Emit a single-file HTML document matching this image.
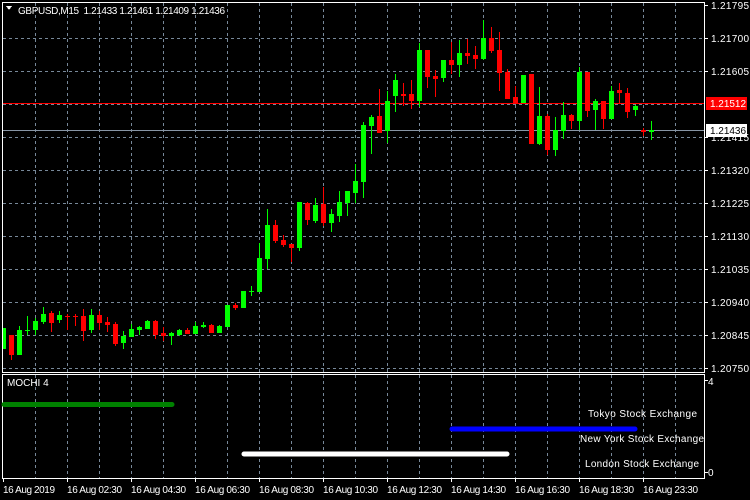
<!DOCTYPE html>
<html><head><meta charset="utf-8"><style>
html,body{margin:0;padding:0;background:#000;width:750px;height:500px;overflow:hidden}
svg{display:block}
text{font-family:"Liberation Sans","DejaVu Sans",sans-serif;font-size:10px;fill:#fff}
</style></head><body>
<svg width="750" height="500" viewBox="0 0 750 500" xmlns="http://www.w3.org/2000/svg" shape-rendering="crispEdges">
<rect width="750" height="500" fill="#000"/>
<g stroke="#778899" stroke-width="1" stroke-dasharray="3,3">
<path d="M35.5 3V372M67.5 3V372M99.5 3V372M131.5 3V372M163.5 3V372M195.5 3V372M227.5 3V372M259.5 3V372M291.5 3V372M323.5 3V372M355.5 3V372M387.5 3V372M419.5 3V372M451.5 3V372M483.5 3V372M515.5 3V372M547.5 3V372M579.5 3V372M611.5 3V372M643.5 3V372M675.5 3V372"/>
<path d="M3 38.5H704M3 71.5H704M3 104.5H704M3 137.5H704M3 170.5H704M3 203.5H704M3 236.5H704M3 269.5H704M3 302.5H704M3 335.5H704M3 368.5H704"/>
<path d="M35.5 375V478M67.5 375V478M99.5 375V478M131.5 375V478M163.5 375V478M195.5 375V478M227.5 375V478M259.5 375V478M291.5 375V478M323.5 375V478M355.5 375V478M387.5 375V478M419.5 375V478M451.5 375V478M483.5 375V478M515.5 375V478M547.5 375V478M579.5 375V478M611.5 375V478M643.5 375V478M675.5 375V478"/>
</g>
<line x1="2" y1="103.5" x2="704" y2="103.5" stroke="#ff0000"/>
<line x1="2" y1="130.5" x2="704" y2="130.5" stroke="#8795a5"/>
<rect x="2.5" y="2.5" width="702" height="370" fill="none" stroke="#fff"/>
<rect x="2.5" y="374.5" width="702" height="104" fill="none" stroke="#fff"/>
<g stroke="#fff"><path d="M705 5.5H708M705 38.5H708M705 71.5H708M705 137.5H708M705 170.5H708M705 203.5H708M705 236.5H708M705 269.5H708M705 302.5H708M705 335.5H708M705 368.5H708M705 380.5H708M705 472.5H708"/>
<path d="M3.5 479V482M67.5 479V482M131.5 479V482M195.5 479V482M259.5 479V482M323.5 479V482M387.5 479V482M451.5 479V482M515.5 479V482M579.5 479V482M643.5 479V482"/></g>
<g>
<text x="711" y="9" textLength="38">1.21795</text><text x="711" y="42" textLength="38">1.21700</text><text x="711" y="75" textLength="38">1.21605</text>
<text x="711" y="141" textLength="38">1.21415</text><text x="711" y="174" textLength="38">1.21320</text><text x="711" y="207" textLength="38">1.21225</text>
<text x="711" y="240" textLength="38">1.21130</text><text x="711" y="273" textLength="38">1.21035</text><text x="711" y="306" textLength="38">1.20940</text>
<text x="711" y="339" textLength="38">1.20845</text><text x="711" y="372" textLength="38">1.20750</text>
</g>
<rect x="706" y="97" width="41" height="13" fill="#ff0000"/>
<text x="710" y="107" textLength="36">1.21512</text>
<rect x="706" y="124" width="41" height="13" fill="#fff"/>
<text x="710" y="134" textLength="36" style="fill:#000">1.21436</text>
<path d="M6 6H12L9 10Z" fill="#fff"/>
<text x="18" y="14" textLength="207" xml:space="preserve">GBPUSD,M15  1.21433 1.21461 1.21409 1.21436</text>
<text x="7" y="386">MOCHI 4</text>
<text x="708" y="385">4</text><text x="708" y="476">0</text>
<g stroke-linecap="round" stroke-width="5" shape-rendering="auto">
<line x1="4" y1="404.5" x2="172" y2="404.5" stroke="#008000"/>
<line x1="452" y1="429" x2="635" y2="429" stroke="#0000ff"/>
<line x1="244" y1="454" x2="507" y2="454" stroke="#fff"/>
</g>
<text x="588" y="417" textLength="109">Tokyo Stock Exchange</text>
<text x="580" y="442" textLength="124">New York Stock Exchange</text>
<text x="585" y="467" textLength="114">London Stock Exchange</text>
<g>
<text x="3" y="493" textLength="52">16 Aug 2019</text><text x="67" y="493" textLength="55">16 Aug 02:30</text><text x="131" y="493" textLength="55">16 Aug 04:30</text>
<text x="195" y="493" textLength="55">16 Aug 06:30</text><text x="259" y="493" textLength="55">16 Aug 08:30</text><text x="323" y="493" textLength="55">16 Aug 10:30</text>
<text x="387" y="493" textLength="55">16 Aug 12:30</text><text x="451" y="493" textLength="55">16 Aug 14:30</text><text x="515" y="493" textLength="55">16 Aug 16:30</text>
<text x="579" y="493" textLength="55">16 Aug 18:30</text><text x="643" y="493" textLength="55">16 Aug 23:30</text>
</g>
<g>
<g fill="#00ff00">
<rect x="3" y="328" width="3" height="21"/>
<rect x="19" y="326" width="1" height="29"/><rect x="17" y="330" width="5" height="25"/>
<rect x="27" y="316" width="1" height="19"/><rect x="25" y="330" width="5" height="1"/>
<rect x="35" y="318" width="1" height="17"/><rect x="33" y="321" width="5" height="9"/>
<rect x="43" y="307" width="1" height="17"/><rect x="41" y="314" width="5" height="8"/>
<rect x="59" y="311" width="1" height="12"/><rect x="57" y="315" width="5" height="5"/>
<rect x="91" y="309" width="1" height="24"/><rect x="89" y="315" width="5" height="15"/>
<rect x="123" y="331" width="1" height="18"/><rect x="121" y="336" width="5" height="7"/>
<rect x="131" y="324" width="1" height="13"/><rect x="129" y="329" width="5" height="8"/>
<rect x="139" y="326" width="1" height="9"/><rect x="137" y="327" width="5" height="3"/>
<rect x="147" y="320" width="1" height="9"/><rect x="145" y="321" width="5" height="8"/>
<rect x="171" y="332" width="1" height="13"/><rect x="169" y="333" width="5" height="3"/>
<rect x="179" y="329" width="1" height="7"/><rect x="177" y="330" width="5" height="5"/>
<rect x="195" y="322" width="1" height="12"/><rect x="193" y="326" width="5" height="8"/>
<rect x="203" y="322" width="1" height="6"/><rect x="201" y="325" width="5" height="2"/>
<rect x="219" y="325" width="1" height="8"/><rect x="217" y="326" width="5" height="7"/>
<rect x="227" y="305" width="1" height="22"/><rect x="225" y="305" width="5" height="22"/>
<rect x="243" y="291" width="1" height="17"/><rect x="241" y="291" width="5" height="17"/>
<rect x="251" y="286" width="1" height="10"/><rect x="249" y="291" width="5" height="1"/>
<rect x="259" y="243" width="1" height="49"/><rect x="257" y="258" width="5" height="34"/>
<rect x="267" y="209" width="1" height="60"/><rect x="265" y="225" width="5" height="34"/>
<rect x="299" y="202" width="1" height="49"/><rect x="297" y="202" width="5" height="46"/>
<rect x="315" y="198" width="1" height="25"/><rect x="313" y="205" width="5" height="16"/>
<rect x="331" y="209" width="1" height="23"/><rect x="329" y="214" width="5" height="9"/>
<rect x="339" y="191" width="1" height="31"/><rect x="337" y="202" width="5" height="14"/>
<rect x="347" y="191" width="1" height="25"/><rect x="345" y="191" width="5" height="12"/>
<rect x="355" y="164" width="1" height="39"/><rect x="353" y="181" width="5" height="12"/>
<rect x="363" y="122" width="1" height="76"/><rect x="361" y="125" width="5" height="57"/>
<rect x="371" y="115" width="1" height="39"/><rect x="369" y="117" width="5" height="9"/>
<rect x="387" y="91" width="1" height="52"/><rect x="385" y="101" width="5" height="30"/>
<rect x="395" y="74" width="1" height="38"/><rect x="393" y="80" width="5" height="16"/>
<rect x="419" y="43" width="1" height="64"/><rect x="417" y="50" width="5" height="51"/>
<rect x="443" y="60" width="1" height="22"/><rect x="441" y="60" width="5" height="18"/>
<rect x="459" y="40" width="1" height="37"/><rect x="457" y="53" width="5" height="12"/>
<rect x="483" y="20" width="1" height="40"/><rect x="481" y="38" width="5" height="21"/>
<rect x="523" y="75" width="1" height="28"/><rect x="521" y="75" width="5" height="28"/>
<rect x="539" y="87" width="1" height="58"/><rect x="537" y="116" width="5" height="28"/>
<rect x="555" y="117" width="1" height="39"/><rect x="553" y="130" width="5" height="20"/>
<rect x="563" y="102" width="1" height="37"/><rect x="561" y="115" width="5" height="16"/>
<rect x="579" y="67" width="1" height="63"/><rect x="577" y="72" width="5" height="49"/>
<rect x="595" y="99" width="1" height="31"/><rect x="593" y="101" width="5" height="9"/>
<rect x="611" y="86" width="1" height="33"/><rect x="609" y="91" width="5" height="28"/>
<rect x="635" y="105" width="1" height="11"/><rect x="633" y="106" width="5" height="4"/>
<rect x="651" y="121" width="1" height="19"/><rect x="649" y="130" width="5" height="2"/>
</g>
<g fill="#ff0000">
<rect x="11" y="335" width="1" height="25"/><rect x="9" y="335" width="5" height="20"/>
<rect x="51" y="311" width="1" height="21"/><rect x="49" y="313" width="5" height="10"/>
<rect x="67" y="314" width="1" height="16"/><rect x="65" y="316" width="5" height="1"/>
<rect x="75" y="314" width="1" height="12"/><rect x="73" y="316" width="5" height="1"/>
<rect x="83" y="309" width="1" height="32"/><rect x="81" y="316" width="5" height="15"/>
<rect x="99" y="311" width="1" height="19"/><rect x="97" y="315" width="5" height="8"/>
<rect x="107" y="317" width="1" height="15"/><rect x="105" y="322" width="5" height="3"/>
<rect x="115" y="322" width="1" height="24"/><rect x="113" y="324" width="5" height="20"/>
<rect x="155" y="320" width="1" height="19"/><rect x="153" y="321" width="5" height="14"/>
<rect x="163" y="327" width="1" height="14"/><rect x="161" y="333" width="5" height="3"/>
<rect x="187" y="328" width="1" height="6"/><rect x="185" y="330" width="5" height="4"/>
<rect x="211" y="324" width="1" height="9"/><rect x="209" y="325" width="5" height="8"/>
<rect x="235" y="303" width="1" height="7"/><rect x="233" y="305" width="5" height="3"/>
<rect x="275" y="220" width="1" height="23"/><rect x="273" y="225" width="5" height="16"/>
<rect x="283" y="235" width="1" height="12"/><rect x="281" y="240" width="5" height="5"/>
<rect x="291" y="244" width="1" height="18"/><rect x="289" y="244" width="5" height="4"/>
<rect x="307" y="202" width="1" height="23"/><rect x="305" y="203" width="5" height="17"/>
<rect x="323" y="187" width="1" height="39"/><rect x="321" y="204" width="5" height="19"/>
<rect x="379" y="89" width="1" height="44"/><rect x="377" y="116" width="5" height="17"/>
<rect x="403" y="83" width="1" height="23"/><rect x="401" y="94" width="5" height="2"/>
<rect x="411" y="80" width="1" height="29"/><rect x="409" y="94" width="5" height="7"/>
<rect x="427" y="50" width="1" height="38"/><rect x="425" y="50" width="5" height="27"/>
<rect x="435" y="70" width="1" height="27"/><rect x="433" y="76" width="5" height="3"/>
<rect x="451" y="42" width="1" height="32"/><rect x="449" y="60" width="5" height="5"/>
<rect x="467" y="39" width="1" height="25"/><rect x="465" y="53" width="5" height="3"/>
<rect x="475" y="46" width="1" height="23"/><rect x="473" y="55" width="5" height="4"/>
<rect x="491" y="27" width="1" height="26"/><rect x="489" y="38" width="5" height="13"/>
<rect x="499" y="32" width="1" height="59"/><rect x="497" y="50" width="5" height="23"/>
<rect x="507" y="69" width="1" height="30"/><rect x="505" y="72" width="5" height="27"/>
<rect x="515" y="86" width="1" height="18"/><rect x="513" y="97" width="5" height="7"/>
<rect x="531" y="74" width="1" height="70"/><rect x="529" y="74" width="5" height="70"/>
<rect x="547" y="114" width="1" height="41"/><rect x="545" y="116" width="5" height="34"/>
<rect x="571" y="114" width="1" height="15"/><rect x="569" y="115" width="5" height="6"/>
<rect x="587" y="72" width="1" height="45"/><rect x="585" y="72" width="5" height="39"/>
<rect x="603" y="101" width="1" height="28"/><rect x="601" y="101" width="5" height="18"/>
<rect x="619" y="83" width="1" height="20"/><rect x="617" y="90" width="5" height="3"/>
<rect x="627" y="88" width="1" height="30"/><rect x="625" y="93" width="5" height="19"/>
<rect x="643" y="128" width="1" height="8"/><rect x="641" y="130" width="5" height="2"/>
</g>
</g>
</svg>
</body></html>
